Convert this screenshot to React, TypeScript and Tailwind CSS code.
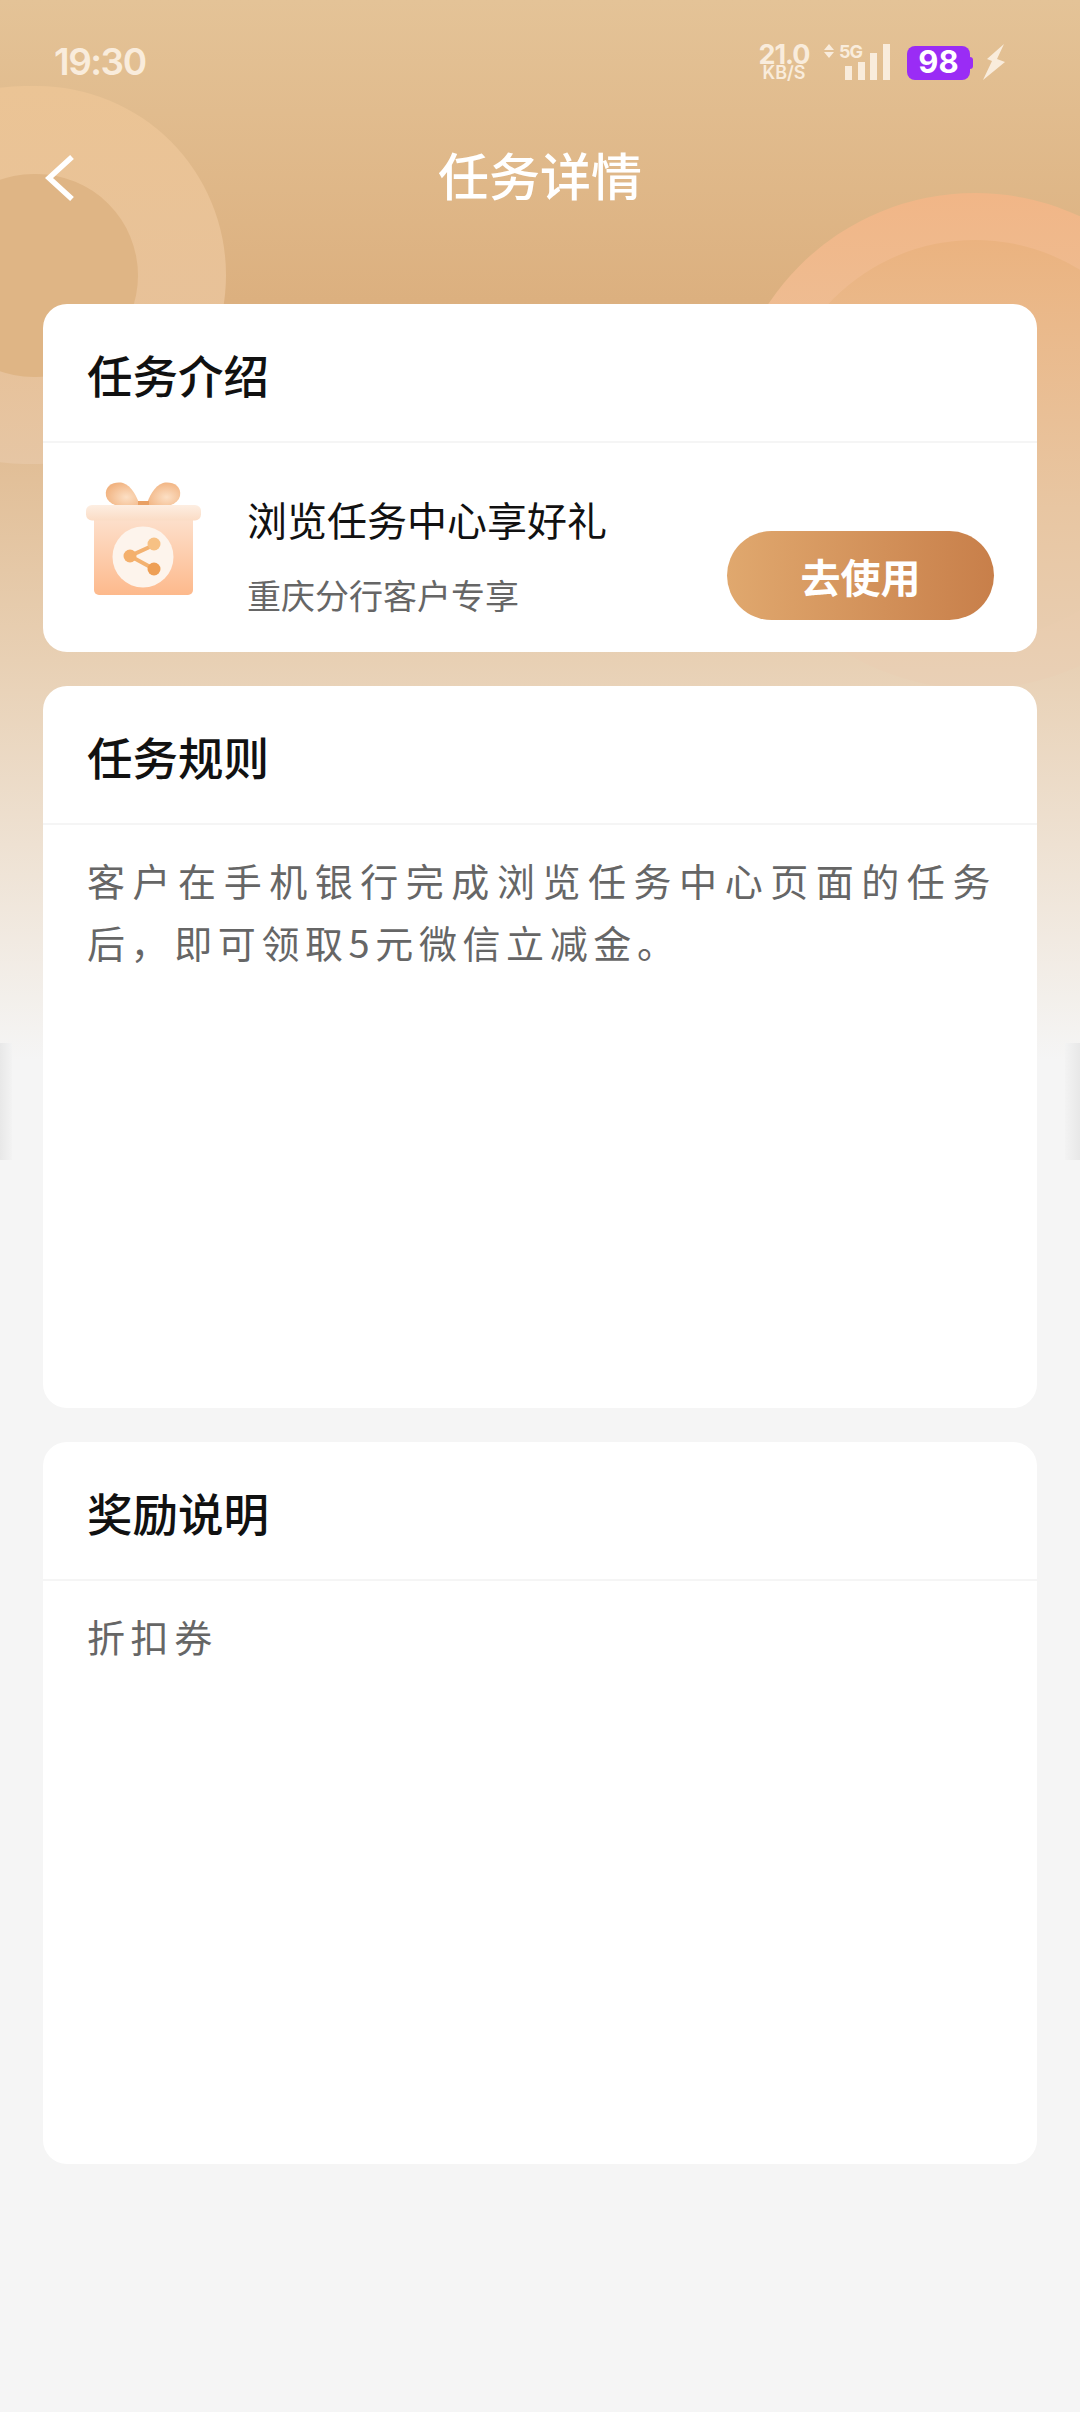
const cjk = "font-['Noto_Sans_CJK_SC','Liberation_Sans',sans-serif]";

function Gift() {
  return (
    <svg width="120" height="120" viewBox="24 18 120 120" className="shrink-0">
      <defs>
        <linearGradient id="box" x1="0" y1="0" x2="0" y2="1">
          <stop offset="0" stopColor="#fde0cc" />
          <stop offset="1" stopColor="#fdb98c" />
        </linearGradient>
        <linearGradient id="lid" x1="0" y1="0" x2="0" y2="1">
          <stop offset="0" stopColor="#fdeee2" />
          <stop offset="1" stopColor="#fbdcc5" />
        </linearGradient>
        <radialGradient id="bow" cx="0.6" cy="0.6" r="0.65">
          <stop offset="0" stopColor="#fcdfc4" />
          <stop offset="1" stopColor="#f1b27f" />
        </radialGradient>
      </defs>
      <path d="M81 46 C70 48 50 48 47 36 C45 25 56 21 64 23 C73 26 78 37 81 46Z" fill="url(#bow)" />
      <path d="M87 46 C98 48 118 48 121 36 C123 25 112 21 104 23 C95 26 90 37 87 46Z" fill="url(#bow)" />
      <rect x="79" y="41" width="11" height="5" fill="#e9a064" />
      <path d="M35 58 H134 V130 a5 5 0 0 1 -5 5 H40 a5 5 0 0 1 -5 -5Z" fill="url(#box)" />
      <rect x="27" y="45" width="115" height="15.5" rx="6" fill="url(#lid)" />
      <circle cx="84" cy="97" r="30.5" fill="#fdf4ec" />
      <path d="M95 85 L71 96 L95 109" fill="none" stroke="#f3b271" strokeWidth="4" />
      <circle cx="95" cy="84" r="6.5" fill="#f7c184" />
      <circle cx="71" cy="96" r="6.5" fill="#f4b06c" />
      <circle cx="95" cy="109" r="6.5" fill="#ee9f55" />
    </svg>
  );
}

function StatusBar() {
  return (
    <div className="flex h-[124px] items-center justify-between pl-[54px] pr-[75px] text-[#f9ecdc]">
      <span className="font-['Inter',sans-serif] text-[37px] font-semibold tracking-[-1.5px]">19:30</span>
      <div className="flex items-center font-['Inter',sans-serif]">
        <div className="flex w-[54px] flex-col items-center">
          <span className="text-[27px] leading-[21px] font-bold tracking-[-1px]">21.0</span>
          <span className="text-[18px] leading-[15px] font-semibold">KB/S</span>
        </div>
        <div className="relative ml-[13px] h-[36px] w-[66px]">
          <svg width="66" height="36" viewBox="0 0 66 36">
            <path d="M5 0 L10 6 H0Z M5 14 L10 8 H0Z" fill="#f9ecdc" />
            <rect x="21" y="22" width="7" height="14" fill="#f9ecdc" />
            <rect x="34" y="18" width="7" height="18" fill="#f9ecdc" />
            <rect x="46" y="9" width="7" height="27" fill="#f9ecdc" />
            <rect x="59" y="0" width="7" height="36" fill="#f9ecdc" />
          </svg>
          <span className="absolute left-[15px] top-[-1px] text-[18px] leading-[18px] font-bold tracking-[-1px]">5G</span>
        </div>
        <div className="relative ml-[17px] mt-[1px] flex h-[34px] w-[63px] items-center justify-center rounded-[8px] bg-[#9a2cf5] text-[31px] font-bold text-white">
          98
          <span className="absolute right-[-3px] top-[11px] h-[12px] w-[3px] rounded-r-sm bg-[#9a2cf5]" />
        </div>
        <svg width="22" height="36" viewBox="0 0 22 36" className="ml-[13px]">
          <path d="M21 0 L4 15 L9 17 L0 36 L22 18 L14 15 L21 0Z" fill="#f9ecdc" />
        </svg>
      </div>
    </div>
  );
}

function Card({ title, className, children }: { title: string; className: string; children: React.ReactNode }) {
  return (
    <section className={`overflow-hidden rounded-[24px] bg-white ${className}`}>
      <h2 className="flex h-[139px] items-center border-b-2 border-[#f5f5f5] pl-[44px] pt-[4px] text-[45.5px] font-medium text-[#111]">{title}</h2>
      {children}
    </section>
  );
}

export default function App() {
  return (
    <div className={`relative h-[2412px] w-[1080px] overflow-hidden bg-[#f5f5f5] ${cjk}`}>
      {/* backdrop */}
      <div className="absolute inset-x-0 top-0 h-[1060px] bg-[linear-gradient(180deg,#e4c397_0px,#dcb07f_300px,#e8d0b4_660px,#f5f5f5_1060px)]" />
      <div className="absolute left-[-164px] top-[86px] flex h-[378px] w-[390px] items-center justify-center rounded-full bg-[linear-gradient(180deg,#ebc495,#e7c199_70%,#e6c6a4)]">
        <div className="ml-[8px] h-[203px] w-[206px] rounded-full bg-[#dfb585]" />
      </div>
      <div className="absolute left-[727px] top-[193px] flex h-[496px] w-[496px] justify-center rounded-full bg-[linear-gradient(180deg,#f1b687,#e9c8a6_70%,#e9d0b6_100%)]">
        <div className="mt-[47px] h-[400px] w-[400px] rounded-full bg-[linear-gradient(180deg,#ebb380,#e8c6a2_67%,#e8cdb0)]" />
      </div>
      <div className="absolute left-0 top-[1043px] h-[117px] w-[12px] bg-[linear-gradient(90deg,#e8e8e8,#f3f3f3)]" />
      <div className="absolute right-0 top-[1043px] h-[117px] w-[15px] bg-[linear-gradient(270deg,#e8e8e8,#f3f3f3)]" />

      <div className="relative">
        <StatusBar />
        <div className="relative flex h-[106px] items-center justify-center pb-[5px]">
          <svg width="30" height="48" viewBox="0 0 30 48" className="absolute left-[45px] top-[30px]">
            <path d="M27 3 L4 24 L27 45" fill="none" stroke="#fff" strokeWidth="5.5" />
          </svg>
          <h1 className="text-[51px] font-medium text-white">任务详情</h1>
        </div>

        <main className="mx-[43px] mt-[74px] flex flex-col">
          <Card title="任务介绍" className="h-[348px]">
            <div className="flex h-[209px] items-start pl-[40px] pt-[35px]">
              <Gift />
              <div className="ml-[44px] flex flex-col">
                <span className="mt-[12px] text-[40px] leading-[58px] text-[#111]">浏览任务中心享好礼</span>
                <span className="mt-[22px] text-[34px] leading-[50px] text-[#666]">重庆分行客户专享</span>
              </div>
              <button className="ml-auto mr-[43px] mt-[53px] h-[89px] w-[267px] rounded-full bg-[linear-gradient(90deg,#e0a86e,#c87f4a)] text-[40px] font-bold text-white">去使用</button>
            </div>
          </Card>
          <Card title="任务规则" className="mt-[34px] h-[722px]">
            <p className="pl-[44px] pr-[41px] pt-[24px] text-justify text-[38px] leading-[62px] tracking-[5.6px] text-[#666]">
              客户在手机银行完成浏览任务中心页面的任务后，即可领取5元微信立减金。
            </p>
          </Card>
          <Card title="奖励说明" className="mt-[34px] h-[722px]">
            <p className="px-[44px] pt-[24px] text-[38px] leading-[62px] tracking-[5.6px] text-[#666]">折扣券</p>
          </Card>
        </main>
      </div>
    </div>
  );
}
